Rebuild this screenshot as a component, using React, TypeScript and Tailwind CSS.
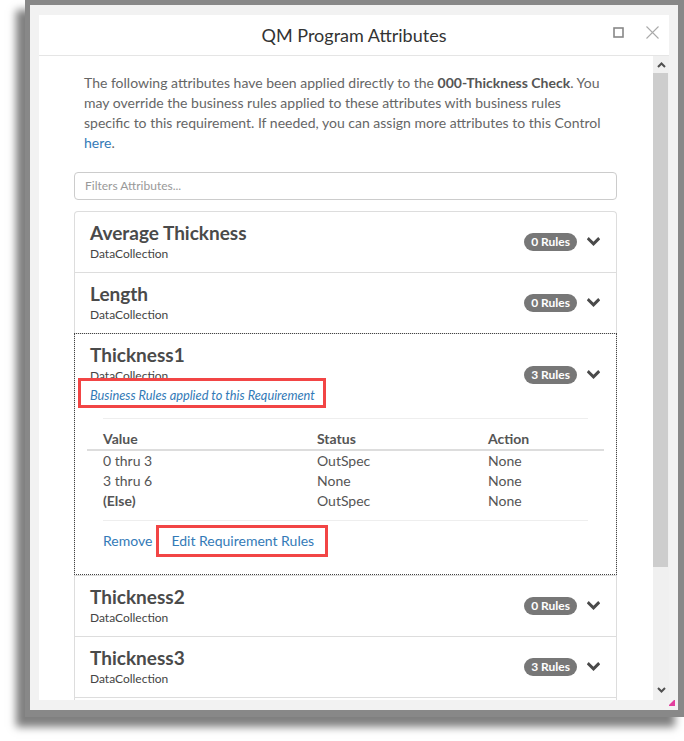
import React from "react";

const FONT = { fontFamily: "Lato, 'Open Sans', sans-serif" };

const Chevron = () => (
  <svg width="13" height="10" viewBox="0 0 13 10" className="shrink-0">
    <path d="M1.8 2.2 L6.5 6.9 L11.2 2.2" fill="none" stroke="#4a4a4a" strokeWidth="3" strokeLinecap="square" />
  </svg>
);

const Badge = ({ n }: { n: number }) => (
  <span className="inline-flex items-center justify-center h-[18px] px-[7px] rounded-full bg-[#777] text-white text-[12px] font-bold leading-none">
    {n} Rules
  </span>
);

const Collapsed = ({ title, n, first }: { title: string; n: number; first?: boolean }) => (
  <div className={`${first ? "border-t rounded-t-[4px]" : "border-t"} border-x border-[#ddd] flex items-center pl-[15px] pr-[16px] pt-[10px] pb-[10px]`}>
    <div className="flex-1">
      <div className="text-[19px] font-bold leading-[22px] text-[#4a4a4a]">{title}</div>
      <div className="mt-[2px] text-[12px] leading-[16px] text-[#444]">DataCollection</div>
    </div>
    <div className="flex items-center gap-[10px]">
      <Badge n={n} />
      <Chevron />
    </div>
  </div>
);

const rows = [
  { v: "0 thru 3", s: "OutSpec", a: "None", b: false },
  { v: "3 thru 6", s: "None", a: "None", b: false },
  { v: "(Else)", s: "OutSpec", a: "None", b: true },
];

export default function App() {
  return (
    <div className="bg-white w-[684px] h-[741px] overflow-hidden" style={FONT}>
      <div className="ml-[25px] w-[659px] h-[717px] bg-[#888] pt-[5px] pl-[5px] pr-[6px] pb-[7px] shadow-[-9px_10px_8px_rgba(0,0,0,0.5)]">
        <div className="relative bg-[#f2f2f2] h-full pt-[10px] pl-[9px] pr-[9px] pb-[10px]">
          <div className="bg-white h-full flex flex-col overflow-hidden">
            {/* header */}
            <div className="relative h-[41px] shrink-0 border-b border-[#e5e5e5] flex items-center justify-center">
              <span className="text-[18px] text-[#333] leading-none">QM Program Attributes</span>
              <svg className="absolute left-[574px] top-[12px]" width="11" height="11" viewBox="0 0 11 11">
                <rect x="1" y="1" width="9" height="9" fill="none" stroke="#888" strokeWidth="1.6" />
              </svg>
              <svg className="absolute left-[607px] top-[11px]" width="13" height="13" viewBox="0 0 13 13">
                <path d="M0.5 0.5 L12.5 12.5 M12.5 0.5 L0.5 12.5" stroke="#aaa" strokeWidth="1.1" />
              </svg>
            </div>
            {/* body */}
            <div className="flex-1 flex min-h-0">
              <div className="flex-1 overflow-hidden pl-[35px] pr-[36px] pt-[17px]">
                <p className="px-[10px] text-[14px] leading-[20px] text-[#666]">
                  The following attributes have been applied directly to the <b className="text-[#555]">000-Thickness Check</b>. You
                  <br />
                  may override the business rules applied to these attributes with business rules
                  <br />
                  specific to this requirement. If needed, you can assign more attributes to this Control
                  <br />
                  <span className="text-[#337ab7]">here</span>.
                </p>
                <div className="mt-[19px] h-[28px] border border-[#ccc] rounded-[4px] flex items-center pl-[10px] text-[12px] text-[#999]">
                  Filters Attributes...
                </div>
                <div className="mt-[11px]">
                  <Collapsed title="Average Thickness" n={0} first />
                  <Collapsed title="Length" n={0} />
                  {/* expanded */}
                  <div className="border-t border-x border-[#ddd] outline outline-1 outline-dotted outline-[#444] -outline-offset-1">
                    <div className="flex items-center pl-[15px] pr-[16px] pt-[10px] pb-[13px]">
                      <div className="flex-1">
                        <div className="text-[19px] font-bold leading-[22px] text-[#4a4a4a]">Thickness1</div>
                        <div className="mt-[2px] text-[12px] leading-[16px] text-[#444]">DataCollection</div>
                        <div className="mt-[1px] h-[20px] text-[12px] leading-[20px]">
                          <span className="relative inline-block align-top text-[12.8px] leading-[20px] italic text-[#337ab7]">
                            Business Rules applied to this Requirement
                            <span className="absolute left-[-12px] right-[-11px] top-[-7px] bottom-[-3px] border-[3px] border-[#f24545]" />
                          </span>
                        </div>
                      </div>
                      <div className="flex items-center gap-[10px]">
                        <Badge n={3} />
                        <Chevron />
                      </div>
                    </div>
                    <div className="px-[12px] pb-[24px]">
                      <div className="mx-[16px] border-t border-[#eee]" />
                      <table className="mt-[10px] w-full text-[14px] leading-[20px] text-[#555] border-collapse">
                        <thead>
                          <tr className="border-b-2 border-[#ddd]">
                            <th className="w-[214px] text-left font-bold pl-[16px] py-0">Value</th>
                            <th className="w-[171px] text-left font-bold pl-[16px] py-0">Status</th>
                            <th className="text-left font-bold pl-[16px] py-0">Action</th>
                          </tr>
                        </thead>
                        <tbody>
                          {rows.map((r) => (
                            <tr key={r.v}>
                              <td className={`pl-[16px] py-0 ${r.b ? "font-bold" : ""}`}>{r.v}</td>
                              <td className="pl-[16px] py-0">{r.s}</td>
                              <td className="pl-[16px] py-0">{r.a}</td>
                            </tr>
                          ))}
                        </tbody>
                      </table>
                      <div className="mt-[9px] mx-[16px] border-t border-[#eee]" />
                      <div className="mt-[10px] pl-[16px] flex gap-[19px] text-[14px] leading-[20px] text-[#337ab7]">
                        <span>Remove</span>
                        <span className="relative">
                          Edit Requirement Rules
                          <span className="absolute left-[-15px] right-[-14px] top-[-6px] bottom-[-6px] border-[3px] border-[#f24545]" />
                        </span>
                      </div>
                    </div>
                  </div>
                  <Collapsed title="Thickness2" n={0} />
                  <Collapsed title="Thickness3" n={3} />
                  <div className="h-[60px] border-t border-x border-[#ddd]" />
                </div>
              </div>
              {/* scrollbar */}
              <div className="w-[16px] shrink-0 bg-[#f0f0f0] flex flex-col">
                <div className="h-[17px] flex items-center justify-center">
                  <svg width="9" height="6" viewBox="0 0 9 6">
                    <path d="M1 5 L4.5 1.5 L8 5" fill="none" stroke="#505050" strokeWidth="2" />
                  </svg>
                </div>
                <div className="h-[494px] bg-[#cdcdcd] mr-[1px]" />
                <div className="flex-1" />
                <div className="h-[16px] flex items-start justify-center pt-[3px]">
                  <svg width="9" height="6" viewBox="0 0 9 6">
                    <path d="M1 1 L4.5 4.5 L8 1" fill="none" stroke="#505050" strokeWidth="2" />
                  </svg>
                </div>
              </div>
            </div>
          </div>
          {/* resize grip */}
          <svg className="absolute right-[3px] bottom-[4px]" width="6" height="6" viewBox="0 0 6 6">
            <path d="M5 0 L6 0 L6 6 L0 6 L0 5 Z" fill="#e0208f" opacity="0.85" />
          </svg>
        </div>
      </div>
    </div>
  );
}
